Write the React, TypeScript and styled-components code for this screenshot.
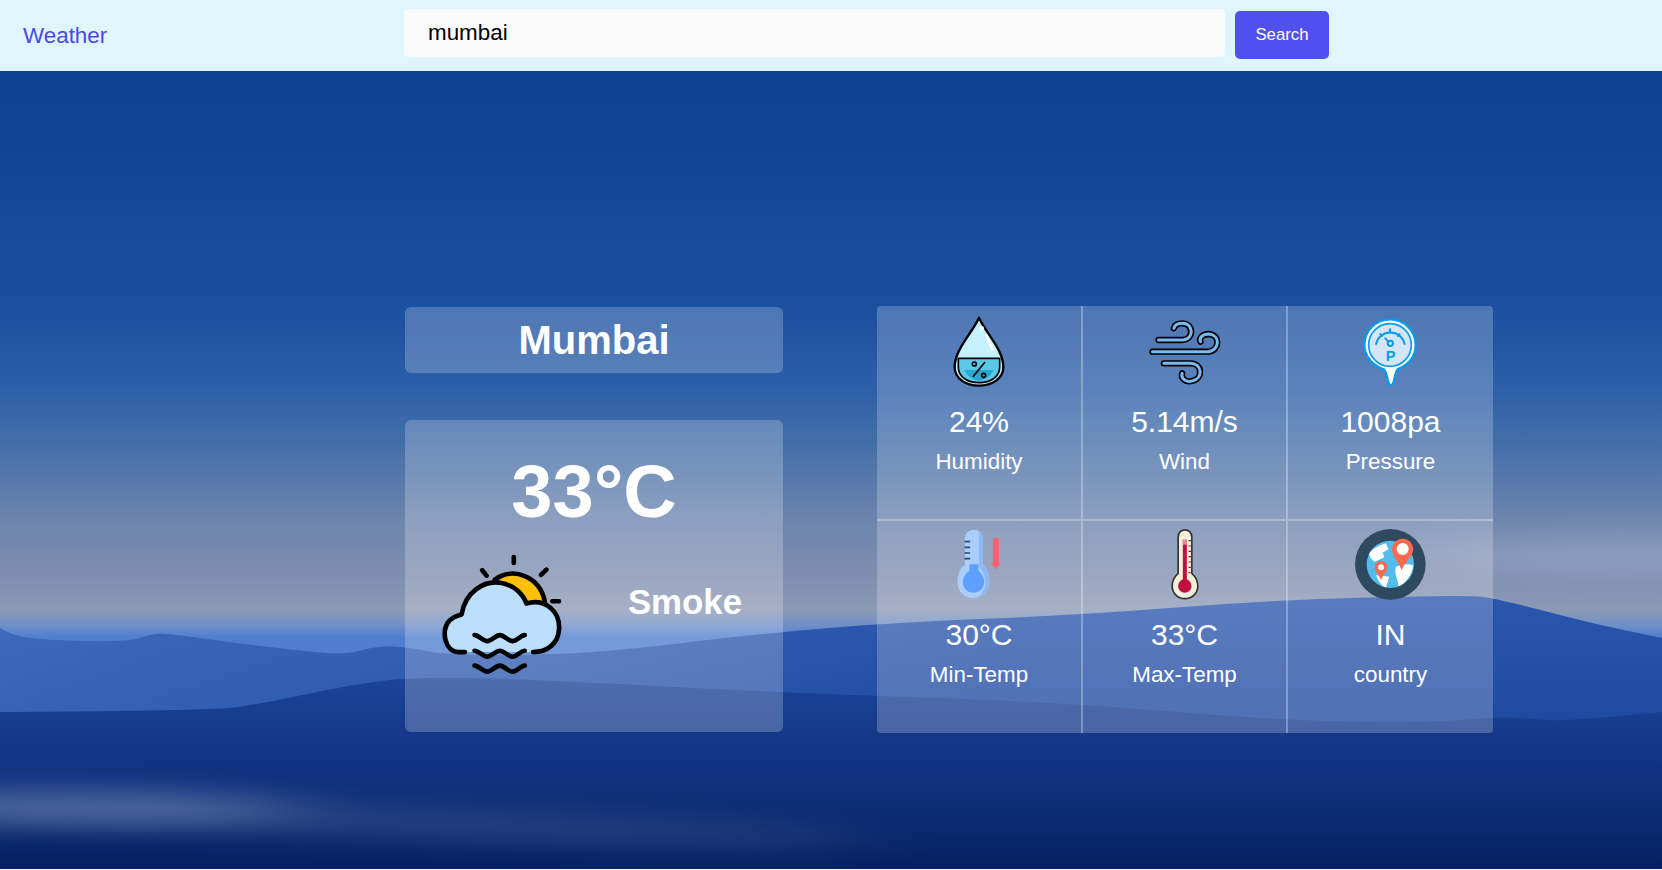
import React from 'react';
import styled, { createGlobalStyle } from 'styled-components';

// turns a list of ridge points into a soft curve, closed along the page bottom
const ridge = (points: number[][]) => {
  let d = `M0 869 L${points[0][0]} ${points[0][1]}`;
  for (let i = 1; i < points.length - 1; i++) {
    const [x, y] = points[i];
    const [nx, ny] = points[i + 1];
    d += ` Q${x} ${y} ${(x + nx) / 2} ${(y + ny) / 2}`;
  }
  const last = points[points.length - 1];
  return `${d} L${last[0]} ${last[1]} L1662 869 Z`;
};

const BACK_RIDGE = [
  [0, 628], [10, 635], [42, 640], [127, 642], [148, 635], [164, 633], [212, 640],
  [318, 653], [350, 654], [376, 646], [408, 647], [445, 655], [551, 655], [636, 649],
  [721, 638], [880, 623], [1081, 615], [1272, 600], [1463, 595], [1495, 598], [1590, 623],
  [1662, 638],
];

const FRONT_RIDGE = [
  [0, 712], [212, 711], [265, 703], [350, 685], [413, 677], [530, 679], [784, 693],
  [1060, 702], [1272, 720], [1431, 723], [1505, 716], [1558, 722], [1662, 712],
];

const Scenery: React.FC = () => (
  <SceneSvg viewBox="0 71 1662 798" aria-hidden="true">
    <defs>
      <linearGradient id="sky" gradientUnits="userSpaceOnUse" x1="0" y1="71" x2="0" y2="869">
        <stop offset="0" stopColor="#0e3f91" />
        <stop offset="0.29" stopColor="#1a4f9f" />
        <stop offset="0.39" stopColor="#2a5ea8" />
        <stop offset="0.47" stopColor="#456fa9" />
        <stop offset="0.56" stopColor="#6c84ad" />
        <stop offset="0.64" stopColor="#818fb0" />
        <stop offset="0.675" stopColor="#8d9ab5" />
        <stop offset="0.695" stopColor="#6f90c8" />
        <stop offset="0.71" stopColor="#4f7ed0" />
        <stop offset="1" stopColor="#4f7ed0" />
      </linearGradient>
      <linearGradient id="back" gradientUnits="userSpaceOnUse" x1="0" y1="600" x2="0" y2="720">
        <stop offset="0" stopColor="#2a56ad" />
        <stop offset="1" stopColor="#1f4aa0" />
      </linearGradient>
      <linearGradient id="backGlow" gradientUnits="userSpaceOnUse" x1="0" y1="0" x2="1000" y2="0">
        <stop offset="0" stopColor="#6f9be6" stopOpacity="0.3" />
        <stop offset="1" stopColor="#6f9be6" stopOpacity="0" />
      </linearGradient>
      <linearGradient id="front" gradientUnits="userSpaceOnUse" x1="0" y1="680" x2="0" y2="869">
        <stop offset="0" stopColor="#1b4397" />
        <stop offset="0.5" stopColor="#103280" />
        <stop offset="1" stopColor="#042161" />
      </linearGradient>
      <filter id="haze" x="-50%" y="-300%" width="200%" height="700%">
        <feGaussianBlur stdDeviation="50 14" />
      </filter>
    </defs>
    <rect x="0" y="71" width="1662" height="798" fill="url(#sky)" />
    <ellipse cx="1620" cy="555" rx="200" ry="22" fill="#b6c4da" opacity="0.3" filter="url(#haze)" />
    <path d={ridge(BACK_RIDGE)} fill="url(#back)" />
    <path d={ridge(BACK_RIDGE)} fill="url(#backGlow)" />
    <path d={ridge(FRONT_RIDGE)} fill="url(#front)" />
    <ellipse cx="40" cy="808" rx="260" ry="16" fill="#ffffff" opacity="0.26" filter="url(#haze)" />
    <ellipse cx="420" cy="824" rx="460" ry="14" fill="#ffffff" opacity="0.12" filter="url(#haze)" transform="rotate(2 420 824)" />
  </SceneSvg>
);

const CloudIcon: React.FC = () => (
  <CloudSvg viewBox="30 20 370 370">
    <path d="M195 100 C250 60 330 90 345 170 L290 172 C275 125 240 105 195 100 Z" fill="#ffc107" />
    <path
      d="M105 318 H85 C45 318 30 250 60 222 C70 213 82 208 95 205 C105 140 160 100 215 110 C255 118 280 145 290 172 C345 155 392 195 388 250 C385 295 350 318 310 318 H105 Z"
      fill="#bbdefb"
    />
    <g fill="none" stroke="#000" strokeWidth="14" strokeLinecap="round" strokeLinejoin="round">
      <path d="M195 100 C250 60 330 90 345 165" />
      <path d="M105 318 H85 C45 318 30 250 60 222 C70 213 82 208 95 205 C105 140 160 100 215 110 C255 118 280 145 290 172 C345 155 392 195 388 250 C385 295 350 318 310 318" />
      <path d="M252 32 V50 M157 72 L170 88 M350 70 L334 86 M368 165 H388" />
      <path d="M134 267 C147 267 159 285 172 285 C185 285 197 267 210 267 C223 267 235 285 248 285 C261 285 273 267 285 267" />
      <path d="M134 314 C147 314 159 332 172 332 C185 332 197 314 210 314 C223 314 235 332 248 332 C261 332 273 314 285 314" />
      <path d="M134 359 C147 359 159 377 172 377 C185 377 197 359 210 359 C223 359 235 377 248 377 C261 377 273 359 285 359" />
    </g>
  </CloudSvg>
);

const DropIcon: React.FC = () => (
  <StatSvg viewBox="42 18 216 216">
    <path d="M150 23 C128 72 77 118 77 172 C77 205 110 227 150 227 C190 227 223 205 223 172 C223 118 172 72 150 23 Z" fill="#c5f1ff" stroke="#000" strokeWidth="7" strokeLinejoin="round" />
    <path d="M88 145 H212 V172 C212 200 185 218 150 218 C115 218 88 200 88 172 Z" fill="#5cc8e8" stroke="#000" strokeWidth="5" strokeLinejoin="round" />
    <path d="M106 180 C114 198 132 212 150 212 C168 212 186 198 194 180 Z" fill="#2ba6cf" />
    <circle cx="136" cy="162" r="6" fill="none" stroke="#000" strokeWidth="5" />
    <circle cx="164" cy="196" r="6" fill="none" stroke="#000" strokeWidth="5" />
    <path d="M132 200 L168 156" stroke="#000" strokeWidth="5" />
    <path d="M172 76 L190 118" stroke="#fff" strokeWidth="8" strokeLinecap="round" />
    <circle cx="158" cy="55" r="7" fill="#fff" />
  </StatSvg>
);

const WIND_LINES = [
  'M84 90 H150 C175 90 187 75 180 55 C172 35 135 35 130 55',
  'M66 125 H235 C268 120 270 75 235 72 C215 72 205 85 210 95',
  'M100 160 H180 C215 160 220 205 185 213 C165 218 150 205 155 190',
];

const WindIcon: React.FC = () => (
  <StatSvg viewBox="55.5 18 216 216">
    {WIND_LINES.map((d) => (
      <path key={d} d={d} fill="none" stroke="#000" strokeWidth="19" strokeLinecap="round" />
    ))}
    {WIND_LINES.map((d) => (
      <path key={`${d}-in`} d={d} fill="none" stroke="#78baf2" strokeWidth="9" strokeLinecap="round" />
    ))}
  </StatSvg>
);

const GaugeIcon: React.FC = () => (
  <StatSvg viewBox="672 18 216 216">
    <path d="M700 105 A77 77 0 0 1 854 105 C854 140 830 165 800 178 C790 186 792 226 780 226 C768 226 770 186 758 178 C726 165 700 140 700 105 Z" fill="#fff" stroke="#0a9be8" strokeWidth="7" strokeLinejoin="round" />
    <circle cx="777" cy="105" r="64" fill="#d3e6f8" stroke="#0a9be8" strokeWidth="5" />
    <g fill="none" stroke="#0a9be8" strokeWidth="6" strokeLinecap="round">
      <path d="M735 102 A44 44 0 0 1 821 102" />
      <path d="M777 58 V66 M748 72 L753 78 M806 72 L801 78" />
      <circle cx="778" cy="100" r="8" />
      <path d="M772 95 L763 85" />
    </g>
    <GaugeLetter x="779" y="154" textAnchor="middle">P</GaugeLetter>
  </StatSvg>
);

const ColdIcon: React.FC = () => (
  <StatSvg viewBox="40.5 27 216 216">
    <path d="M106 134 V56 C106 20 160 20 160 56 V134 C170 142 180 160 180 185 C180 215 155 235 132 235 C105 235 84 215 84 185 C84 160 95 142 106 134 Z" fill="#a9cdfd" />
    <path d="M148 32 C155 38 160 46 160 56 V134 C170 142 180 160 180 185 C180 212 158 234 132 235 C155 228 168 208 168 185 C168 160 150 145 148 134 Z" fill="#8db8f5" />
    <path d="M120 133 H147 V152 C157 160 164 172 164 185 C164 205 150 218 132 218 C114 218 100 205 100 185 C100 172 108 160 120 152 Z" fill="#5f9fff" />
    <path d="M105 65 H122 M105 82 H122 M105 99 H122 M105 116 H122" stroke="#2f4a6a" strokeWidth="5" />
    <path d="M190 55 H208 V130 H214 L199 148 L184 130 H190 Z" fill="#ff6070" />
  </StatSvg>
);

const HotIcon: React.FC = () => (
  <StatSvg viewBox="-4.5 27 216 216">
    <path d="M83 160 V52 C83 22 124 22 124 52 V160 C135 170 142 183 142 198 C142 220 124 236 103 236 C82 236 65 220 65 198 C65 183 72 170 83 160 Z" fill="#f4f0dc" stroke="#333" strokeWidth="5" />
    <path d="M97 60 H109 V178 C116 181 123 188 123 198 C123 210 114 218 103 218 C92 218 83 210 83 198 C83 188 90 181 97 178 Z" fill="#c0103f" />
    <path d="M97 58 H109 V74 H97 Z" fill="#e98aa0" />
    <path d="M114 62 H124 M114 78 H124 M114 94 H124 M114 110 H124 M114 126 H124 M114 142 H124 M114 158 H120" stroke="#444" strokeWidth="3.5" />
  </StatSvg>
);

const GlobeIcon: React.FC = () => (
  <StatSvg viewBox="612 27 216 216">
    <circle cx="718" cy="133" r="106" fill="#2f4a5f" />
    <circle cx="718" cy="133" r="71" fill="#52bdec" />
    <path d="M655 100 C665 85 690 75 705 70 L712 88 L695 98 L700 112 L672 125 C662 120 655 112 655 100 Z" fill="#fff" />
    <path d="M735 140 C750 132 775 130 786 136 C785 165 760 195 742 198 C742 180 728 160 735 140 Z" fill="#fff" />
    <path d="M675 165 L715 170 L705 202 C692 200 680 180 675 165 Z" fill="#fff" />
    <path d="M755 56 C735 56 723 72 723 88 C723 108 745 130 752 150 C760 130 787 108 787 88 C787 72 775 56 755 56 Z" fill="#f96a50" />
    <circle cx="755" cy="87" r="18" fill="#fff" />
    <path d="M690 123 C678 123 671 132 671 142 C671 155 684 166 690 180 C696 166 709 155 709 142 C709 132 702 123 690 123 Z" fill="#f96a50" />
    <circle cx="690" cy="142" r="9" fill="#fff" />
  </StatSvg>
);

const STATS = [
  { icon: <DropIcon />, value: '24%', label: 'Humidity' },
  { icon: <WindIcon />, value: '5.14m/s', label: 'Wind' },
  { icon: <GaugeIcon />, value: '1008pa', label: 'Pressure' },
  { icon: <ColdIcon />, value: '30°C', label: 'Min-Temp' },
  { icon: <HotIcon />, value: '33°C', label: 'Max-Temp' },
  { icon: <GlobeIcon />, value: 'IN', label: 'country' },
];

const App: React.FC = () => (
  <>
    <GlobalStyle />
    <Navbar>
      <Logo>Weather</Logo>
      <SearchInput type="text" value="mumbai" readOnly />
      <SearchButton type="button">Search</SearchButton>
    </Navbar>
    <Main>
      <Scenery />
      <Content>
        <LeftColumn>
          <CityCard>
            <CityName>Mumbai</CityName>
          </CityCard>
          <WeatherCard>
            <Temperature>33°C</Temperature>
            <ConditionRow>
              <CloudIcon />
              <Condition>Smoke</Condition>
            </ConditionRow>
          </WeatherCard>
        </LeftColumn>
        <StatGrid>
          {STATS.map((stat, index) => (
            <StatCell key={stat.label} $index={index}>
              {stat.icon}
              <StatValue>{stat.value}</StatValue>
              <StatLabel>{stat.label}</StatLabel>
            </StatCell>
          ))}
        </StatGrid>
      </Content>
    </Main>
  </>
);

export default App;

const GlobalStyle = createGlobalStyle`
  html, body {
    margin: 0;
    padding: 0;
    background: #fff;
    font-family: "Liberation Sans", Arial, sans-serif;
    overflow: hidden;
  }
  * {
    box-sizing: border-box;
  }
`;

const Navbar = styled.header`
  display: flex;
  align-items: flex-start;
  height: 71px;
  padding-top: 9px;
  background-color: #dff6ff;
`;

const Logo = styled.div`
  width: 404px;
  margin-top: 14px;
  padding-left: 23px;
  font-size: 22.4px;
  color: #4f46e5;
`;

const SearchInput = styled.input`
  width: 821px;
  height: 48px;
  padding: 0 24px;
  border: none;
  border-radius: 4px;
  outline: none;
  background-color: #fafafa;
  font-family: inherit;
  font-size: 22.4px;
  color: #000;
`;

const SearchButton = styled.button`
  width: 94px;
  height: 48px;
  margin: 2px 0 0 10px;
  border: none;
  border-radius: 5px;
  background-color: #5050ee;
  font-family: inherit;
  font-size: 16.8px;
  color: #fff;
`;

const Main = styled.main`
  position: relative;
  height: 798px;
  overflow: hidden;
`;

const SceneSvg = styled.svg`
  position: absolute;
  inset: 0;
  width: 100%;
  height: 100%;
  display: block;
`;

const Content = styled.div`
  position: relative;
  display: flex;
  align-items: flex-start;
  gap: 94px;
  padding: 235px 0 0 405px;
`;

const LeftColumn = styled.div`
  display: flex;
  flex-direction: column;
  gap: 47px;
  width: 378px;
  padding-top: 1px;
`;

const CityCard = styled.div`
  display: flex;
  align-items: center;
  justify-content: center;
  height: 66px;
  border-radius: 6px;
  background-color: rgba(255, 255, 255, 0.22);
`;

const CityName = styled.h2`
  margin: 0;
  font-size: 40px;
  font-weight: 700;
  color: #fff;
`;

const WeatherCard = styled.div`
  height: 312px;
  padding-top: 29px;
  border-radius: 6px;
  background-color: rgba(255, 255, 255, 0.22);
`;

const Temperature = styled.div`
  font-size: 74px;
  font-weight: 700;
  text-align: center;
  color: #fff;
`;

const ConditionRow = styled.div`
  display: flex;
  align-items: center;
  justify-content: space-between;
  margin-top: 19px;
  padding: 0 41px 0 35px;
`;

const CloudSvg = styled.svg`
  display: block;
  width: 123px;
  height: 123px;
`;

const Condition = styled.div`
  margin-bottom: 26px;
  font-size: 34.8px;
  font-weight: 700;
  color: #fff;
`;

const StatGrid = styled.div`
  display: grid;
  grid-template-columns: 206px 205px 205px;
  grid-template-rows: 215px 212px;
  width: 616px;
  border-radius: 4px;
  overflow: hidden;
  background-color: rgba(255, 255, 255, 0.22);
`;

const StatCell = styled.div<{ $index: number }>`
  display: flex;
  flex-direction: column;
  align-items: center;
  padding-top: ${({ $index }) => ($index < 3 ? 10 : 8)}px;
  border-right: ${({ $index }) =>
    $index % 3 < 2 ? '2px solid rgba(255, 255, 255, 0.3)' : 'none'};
  border-bottom: ${({ $index }) =>
    $index < 3 ? '2px solid rgba(255, 255, 255, 0.3)' : 'none'};
`;

const StatSvg = styled.svg`
  display: block;
  flex: none;
  width: 72px;
  height: 72px;
`;

const GaugeLetter = styled.text`
  font-family: "Liberation Sans", Arial, sans-serif;
  font-size: 44px;
  font-weight: 700;
  fill: #0a9be8;
`;

const StatValue = styled.div`
  margin-top: 17px;
  font-size: 30px;
  color: #fff;
`;

const StatLabel = styled.div`
  margin-top: 10px;
  font-size: 22.4px;
  color: #fff;
`;
